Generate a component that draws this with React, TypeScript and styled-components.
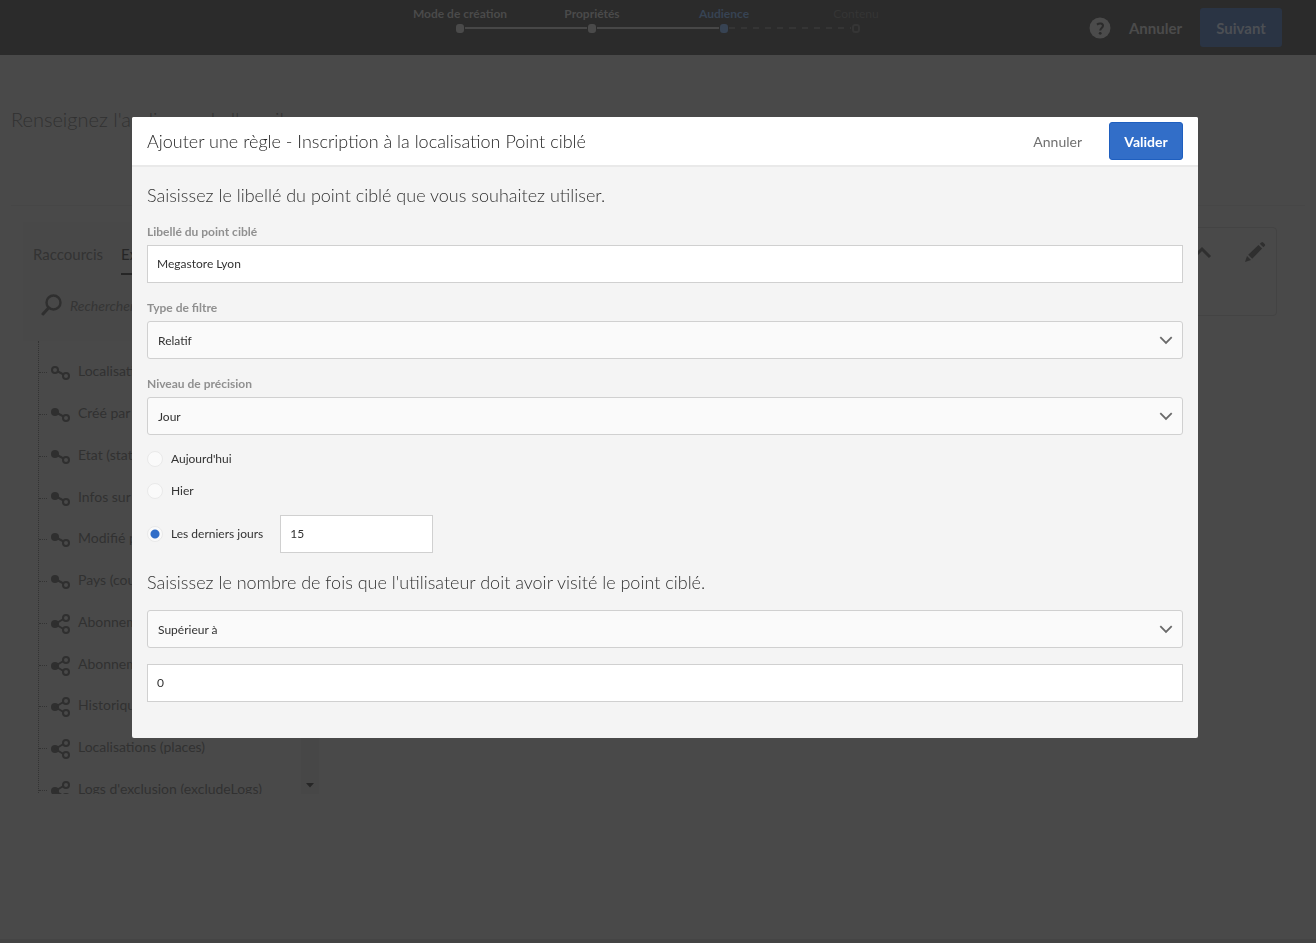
import React, { useState } from 'react';
import styled, { createGlobalStyle } from 'styled-components';

const GlobalStyle = createGlobalStyle`
  *, *::before, *::after { box-sizing: border-box; }
  body {
    margin: 0;
    background: #494949;
    font-family: Lato, "Open Sans", sans-serif;
    font-size: 13px;
    color: #333;
  }
  button, input, select { font: inherit; margin: 0; }
`;

const Page = styled.div`
  min-height: 100vh;
  display: flex;
  flex-direction: column;
  border-bottom: 4px solid #444;
  color: #313131;
`;

const TopBar = styled.header`
  display: grid;
  grid-template-columns: 1fr auto 1fr;
  height: 55px;
  background: #2b2b2b;
`;

const Steps = styled.ol`
  grid-column: 2;
  display: flex;
  margin: 0;
  padding: 6px 0 0;
  list-style: none;
`;

type StepState = 'done' | 'current' | 'next';
const stepColor = (s: StepState) => (s === 'done' ? '#4a4a4a' : s === 'current' ? '#374353' : '#353535');

const Step = styled.li<{ $state: StepState }>`
  width: 132px;
  display: flex;
  flex-direction: column;
  align-items: center;
  font-size: 12px;
  line-height: 16px;
  font-weight: ${(p) => (p.$state === 'next' ? 400 : 700)};
  color: ${(p) => stepColor(p.$state)};
`;

const StepTrack = styled.span`
  align-self: stretch;
  display: grid;
  grid-template-columns: 1fr 10px 1fr;
  align-items: center;
  height: 12px;
`;

const StepLine = styled.span<{ $kind: 'solid' | 'dashed' | 'none' }>`
  height: 2px;
  background: ${(p) =>
    p.$kind === 'solid'
      ? '#474747'
      : p.$kind === 'dashed'
        ? 'repeating-linear-gradient(90deg, #353535 0 6px, transparent 6px 12px)'
        : 'none'};
`;

const StepDot = styled.span<{ $state: StepState }>`
  width: 8px;
  height: 9px;
  justify-self: center;
  border-radius: 3px;
  border: 2px solid ${(p) => stepColor(p.$state)};
  background: ${(p) => (p.$state === 'next' ? 'transparent' : stepColor(p.$state))};
`;

const TopActions = styled.div`
  display: flex;
  justify-content: flex-end;
  align-items: center;
  gap: 18px;
  padding-right: 34px;
`;

const GhostTopButton = styled.button`
  padding: 0;
  border: 0;
  background: none;
  color: #4b4b4b;
  font-size: 15px;
  font-weight: 700;
  display: flex;
`;

const NextButton = styled.button`
  width: 82px;
  height: 39px;
  padding: 0;
  border: 0;
  border-radius: 3px;
  background: #2a3444;
  color: #4c4f54;
  font-size: 15px;
  font-weight: 700;
`;

const Title = styled.h1`
  margin: 50px 11px 0;
  padding-bottom: 72px;
  border-bottom: 1px solid #464646;
  font-size: 20px;
  line-height: 28px;
  font-weight: 300;
`;

const Workspace = styled.main`
  display: grid;
  grid-template-columns: 296px 1fr;
  gap: 12px;
  align-items: start;
  padding: 16px 39px 0 23px;
`;

const Palette = styled.aside`
  display: flex;
  flex-direction: column;
`;

const PaletteHead = styled.div`
  height: 119px;
  padding: 22px 10px 0;
  background: #484848;
`;

const Tabs = styled.div`
  display: flex;
  gap: 18px;
`;

const Tab = styled.button<{ $active?: boolean }>`
  padding: 0 0 9px;
  border: 0;
  border-bottom: 2px solid ${(p) => (p.$active ? '#262626' : 'transparent')};
  background: none;
  color: ${(p) => (p.$active ? '#262626' : '#333')};
  font-size: 15px;
  line-height: 20px;
`;

const SearchRow = styled.label`
  display: flex;
  align-items: center;
  gap: 8px;
  padding: 19px 0 0 8px;
`;

const SearchInput = styled.input`
  min-width: 0;
  flex: 1;
  padding: 0;
  border: 0;
  outline: 0;
  background: none;
  font-size: 14px;
  font-style: italic;
  &::placeholder { color: #353535; opacity: 1; }
`;

const TreeBox = styled.div`
  display: flex;
  height: 453px;
  overflow: hidden;
`;

const Tree = styled.ul`
  flex: 1;
  min-width: 0;
  height: 468px;
  display: flex;
  flex-direction: column;
  margin: 0 0 0 15px;
  padding: 9px 0 0;
  border-left: 1px dotted #333;
  list-style: none;
`;

const TreeItem = styled.li`
  flex: 1;
  display: flex;
  align-items: center;
  font-size: 14px;
  white-space: nowrap;
  &::before {
    content: '';
    width: 8px;
    margin: 4px 3px 0 0;
    border-top: 1px dotted #333;
  }
  svg { margin: 5px 7px 0 0; flex: none; }
`;

const ScrollGutter = styled.div`
  width: 18px;
  display: flex;
  justify-content: center;
  align-items: flex-end;
  padding-bottom: 6px;
  background: #474747;
`;

const RuleCard = styled.section`
  height: 89px;
  margin-top: 5px;
  padding: 12px 10px;
  display: flex;
  justify-content: flex-end;
  gap: 32px;
  border: 1px solid #434343;
  border-radius: 4px;
`;

const IconButton = styled.button`
  height: 24px;
  padding: 0;
  border: 0;
  background: none;
  display: flex;
  align-items: center;
`;

const Backdrop = styled.div`
  position: fixed;
  inset: 0;
  overflow: auto;
  padding: 117px 118px 20px 132px;
`;

const Dialog = styled.form`
  background: #f4f4f4;
  border-radius: 2px;
  overflow: hidden;
`;

const DialogHeader = styled.div`
  display: flex;
  align-items: center;
  min-height: 50px;
  padding: 0 15px;
  background: #fff;
  border-bottom: 2px solid #e9e9e9;
`;

const DialogTitle = styled.h2`
  flex: 1;
  margin: 0;
  font-size: 18px;
  line-height: 26px;
  font-weight: 300;
  color: #262626;
`;

const CancelButton = styled.button`
  margin-right: 16px;
  padding: 0 11px;
  height: 38px;
  border: 0;
  background: none;
  color: #707070;
  font-size: 14px;
`;

const SubmitButton = styled.button`
  width: 74px;
  height: 38px;
  padding: 0;
  border: 1px solid #1f5fbf;
  border-radius: 3px;
  background: #326ec8;
  color: #fff;
  font-size: 14px;
  font-weight: 700;
`;

const DialogBody = styled.div`
  padding: 15px 15px 36px;
`;

const SectionTitle = styled.h3`
  margin: 0 0 15px;
  font-size: 18px;
  line-height: 26px;
  font-weight: 300;
  color: #323232;
`;

const Field = styled.div`
  display: flex;
  flex-direction: column;
  gap: 4px;
  & + & { margin-top: 16px; }
`;

const FieldLabel = styled.label`
  font-size: 12px;
  line-height: 18px;
  font-weight: 700;
  color: #909090;
`;

const TextInput = styled.input<{ $short?: boolean }>`
  width: ${(p) => (p.$short ? '153px' : '100%')};
  height: 38px;
  padding: 0 9px 2px;
  border: 1px solid #d0d0d0;
  border-radius: 0;
  outline: 0;
  background: #fff;
  color: #323232;
  font-size: 12px;
  font-variant-numeric: lining-nums;
`;

const SelectWrap = styled.div`
  display: grid;
  align-items: center;
  & > * { grid-area: 1 / 1; }
  svg { justify-self: end; margin-right: 10px; pointer-events: none; }
`;

const Select = styled.select`
  width: 100%;
  height: 38px;
  padding: 0 32px 0 10px;
  border: 1px solid #d0d0d0;
  border-radius: 3px;
  appearance: none;
  outline: 0;
  background: #fafafa;
  color: #323232;
  font-size: 12px;
`;

const Choices = styled.fieldset`
  margin: 8px 0 16px;
  padding: 0;
  border: 0;
`;

const ChoiceRow = styled.div`
  display: flex;
  align-items: center;
  gap: 17px;
  min-height: 32px;
  &:last-child { margin-top: 8px; }
`;

const Choice = styled.label`
  display: flex;
  align-items: center;
  gap: 8px;
  font-size: 12px;
  line-height: 16px;
`;

const Radio = styled.input`
  appearance: none;
  width: 16px;
  height: 16px;
  border: 1px solid #e9e9e9;
  border-radius: 50%;
  background: #fafafa;
  &:checked { background: radial-gradient(circle, #326ec8 0 4px, #fafafa 5px); }
`;

const ChevronDown = () => (
  <svg width="14" height="9" viewBox="0 0 14 9" fill="none" stroke="#6a6a6a" strokeWidth="1.8" aria-hidden="true">
    <path d="M1.3 1.2 7 6.900l5.700-5.700" />
  </svg>
);

type LinkKind = 'open' | 'single' | 'many';

const LinkIcon = ({ kind }: { kind: LinkKind }) =>
  kind === 'many' ? (
    <svg width="21" height="20" viewBox="0 0 21 20" fill="none" stroke="#2f2f2f" strokeWidth="2" aria-hidden="true">
      <circle cx="5" cy="10" r="4" fill="#2f2f2f" stroke="none" />
      <path d="m5 10 8.500-5M5 10l8.500 5" />
      <circle cx="16" cy="4" r="3" />
      <circle cx="16" cy="16" r="3" />
    </svg>
  ) : (
    <svg width="21" height="16" viewBox="0 0 21 16" fill="none" stroke="#2f2f2f" strokeWidth="2" aria-hidden="true">
      {kind === 'open' ? (
        <circle cx="5" cy="5" r="3" />
      ) : (
        <circle cx="5" cy="5" r="4" fill="#2f2f2f" stroke="none" />
      )}
      <path d="m8 6.500 5.500 3" />
      <circle cx="16" cy="11" r="3" />
    </svg>
  );

const steps: { label: string; state: StepState }[] = [
  { label: 'Mode de création', state: 'done' },
  { label: 'Propriétés', state: 'done' },
  { label: 'Audience', state: 'current' },
  { label: 'Contenu', state: 'next' },
];

const treeItems: { label: string; kind: LinkKind }[] = [
  { label: 'Localisation', kind: 'open' },
  { label: 'Créé par', kind: 'single' },
  { label: 'Etat (state)', kind: 'single' },
  { label: 'Infos sur', kind: 'single' },
  { label: 'Modifié par', kind: 'single' },
  { label: 'Pays (country)', kind: 'single' },
  { label: 'Abonnements', kind: 'many' },
  { label: 'Abonnements', kind: 'many' },
  { label: 'Historique', kind: 'many' },
  { label: 'Localisations (places)', kind: 'many' },
  { label: "Logs d'exclusion (excludeLogs)", kind: 'many' },
];

const lineBefore = (i: number) => (i === 0 ? 'none' : steps[i].state === 'next' ? 'dashed' : 'solid');
const lineAfter = (i: number) => (i === steps.length - 1 ? 'none' : lineBefore(i + 1));

export default function App() {
  const [label, setLabel] = useState('Megastore Lyon');
  const [period, setPeriod] = useState('last');
  const [days, setDays] = useState('15');
  const [count, setCount] = useState('0');

  return (
    <>
      <GlobalStyle />
      <Page>
        <TopBar>
          <Steps>
            {steps.map((s, i) => (
              <Step key={s.label} $state={s.state}>
                {s.label}
                <StepTrack>
                  <StepLine $kind={lineBefore(i)} />
                  <StepDot $state={s.state} />
                  <StepLine $kind={lineAfter(i)} />
                </StepTrack>
              </Step>
            ))}
          </Steps>
          <TopActions>
            <GhostTopButton type="button" aria-label="Aide">
              <svg width="22" height="22" viewBox="0 0 22 22" aria-hidden="true">
                <circle cx="11" cy="11" r="10.500" fill="#4b4b4b" />
                <path d="M8 7.600c2-1.600 6-1.500 6 1.200 0 2-2.800 2.400-2.800 4.700" fill="none" stroke="#2b2b2b" strokeWidth="2" />
                <circle cx="11.200" cy="16.300" r="1.400" fill="#2b2b2b" />
              </svg>
            </GhostTopButton>
            <GhostTopButton type="button">Annuler</GhostTopButton>
            <NextButton type="button">Suivant</NextButton>
          </TopActions>
        </TopBar>
        <Title>Renseignez l'audience de l'email</Title>
        <Workspace>
          <Palette>
            <PaletteHead>
              <Tabs>
                <Tab type="button">Raccourcis</Tab>
                <Tab type="button" $active>Explorateur</Tab>
              </Tabs>
              <SearchRow>
                <svg width="21" height="22" viewBox="0 0 21 22" fill="none" stroke="#2f2f2f" aria-hidden="true">
                  <circle cx="12.500" cy="8.500" r="7" strokeWidth="2.400" />
                  <path d="m7.500 14-5.500 6" strokeWidth="3" strokeLinecap="round" />
                </svg>
                <SearchInput placeholder="Rechercher" aria-label="Rechercher" />
              </SearchRow>
            </PaletteHead>
            <TreeBox>
              <Tree>
                {treeItems.map((item, i) => (
                  <TreeItem key={i}>
                    <LinkIcon kind={item.kind} />
                    {item.label}
                  </TreeItem>
                ))}
              </Tree>
              <ScrollGutter>
                <svg width="8" height="5" viewBox="0 0 8 5" aria-hidden="true">
                  <path d="M0 0h8L4 4.500z" fill="#262626" />
                </svg>
              </ScrollGutter>
            </TreeBox>
          </Palette>
          <RuleCard>
            <IconButton type="button" aria-label="Replier">
              <svg width="20" height="14" viewBox="0 0 20 14" fill="none" stroke="#2f2f2f" strokeWidth="3" aria-hidden="true">
                <path d="m2 12 8-8 8 8" />
              </svg>
            </IconButton>
            <IconButton type="button" aria-label="Modifier">
              <svg width="22" height="22" viewBox="0 0 22 22" fill="#2f2f2f" aria-hidden="true">
                <path d="M1 21l2-6 4 4zM4.200 13.800 14.500 4l3.600 3.600L8.200 17.800zM15.800 2.800 17.300 1.400q.9-.8 1.800 0l1.600 1.700q.8.900 0 1.800L19.300 6.300z" />
              </svg>
            </IconButton>
          </RuleCard>
        </Workspace>
      </Page>

      <Backdrop>
        <Dialog role="dialog" aria-modal="true" aria-labelledby="dialog-title" onSubmit={(e) => e.preventDefault()}>
          <DialogHeader>
            <DialogTitle id="dialog-title">Ajouter une règle - Inscription à la localisation Point ciblé</DialogTitle>
            <CancelButton type="button">Annuler</CancelButton>
            <SubmitButton type="submit">Valider</SubmitButton>
          </DialogHeader>
          <DialogBody>
            <SectionTitle>Saisissez le libellé du point ciblé que vous souhaitez utiliser.</SectionTitle>
            <Field>
              <FieldLabel htmlFor="poi-label">Libellé du point ciblé</FieldLabel>
              <TextInput id="poi-label" value={label} onChange={(e) => setLabel(e.target.value)} />
            </Field>
            <Field>
              <FieldLabel htmlFor="filter-type">Type de filtre</FieldLabel>
              <SelectWrap>
                <Select id="filter-type"><option>Relatif</option></Select>
                <ChevronDown />
              </SelectWrap>
            </Field>
            <Field>
              <FieldLabel htmlFor="precision">Niveau de précision</FieldLabel>
              <SelectWrap>
                <Select id="precision"><option>Jour</option></Select>
                <ChevronDown />
              </SelectWrap>
            </Field>
            <Choices aria-label="Période">
              <ChoiceRow>
                <Choice>
                  <Radio type="radio" name="period" checked={period === 'today'} onChange={() => setPeriod('today')} />
                  Aujourd'hui
                </Choice>
              </ChoiceRow>
              <ChoiceRow>
                <Choice>
                  <Radio type="radio" name="period" checked={period === 'yesterday'} onChange={() => setPeriod('yesterday')} />
                  Hier
                </Choice>
              </ChoiceRow>
              <ChoiceRow>
                <Choice>
                  <Radio type="radio" name="period" checked={period === 'last'} onChange={() => setPeriod('last')} />
                  Les derniers jours
                </Choice>
                <TextInput $short aria-label="Nombre de jours" value={days} onChange={(e) => setDays(e.target.value)} />
              </ChoiceRow>
            </Choices>
            <SectionTitle>Saisissez le nombre de fois que l'utilisateur doit avoir visité le point ciblé.</SectionTitle>
            <Field>
              <SelectWrap>
                <Select aria-label="Opérateur"><option>Supérieur à</option></Select>
                <ChevronDown />
              </SelectWrap>
            </Field>
            <Field>
              <TextInput aria-label="Nombre de visites" value={count} onChange={(e) => setCount(e.target.value)} />
            </Field>
          </DialogBody>
        </Dialog>
      </Backdrop>
    </>
  );
}
